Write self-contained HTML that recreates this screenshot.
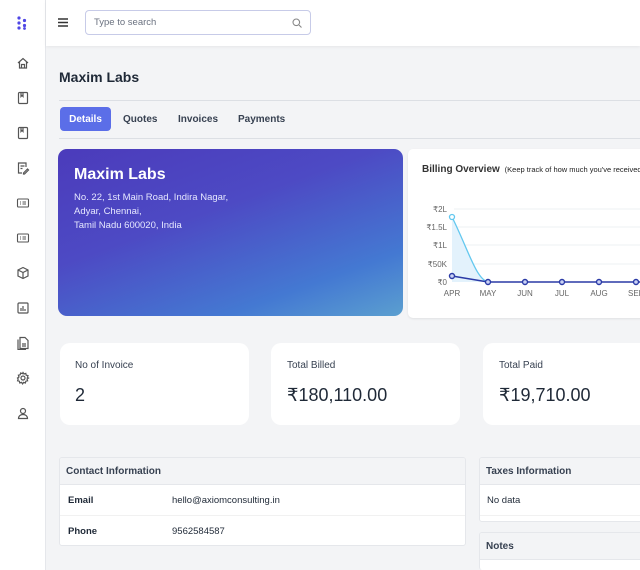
<!DOCTYPE html>
<html style="width:640px;height:570px;overflow:hidden"><head><meta charset="utf-8"><style>
*{box-sizing:border-box;margin:0;padding:0}
body{width:640px;height:570px;overflow:hidden;background:#f3f4f6;font-family:"Liberation Sans",sans-serif;color:#1f2937;position:relative}
.a{position:absolute}
.side{left:0;top:0;width:46px;height:570px;background:#fff;border-right:1px solid #e5e7eb}
.top{left:46px;top:0;width:594px;height:46px;background:#fff;box-shadow:0 1px 3px rgba(0,0,0,.06)}
.ic{position:absolute;left:16px;width:14px;height:14px}
.card{background:#fff;border-radius:10px}
.tab{top:107px;height:24px;font-size:10px;font-weight:bold;line-height:25px;color:#374151}
.lbl{font-size:10px;color:#374151}
.val{font-size:18px;color:#1f2937}
.box{background:#fff;border:1px solid #e5e7eb;border-radius:3px;overflow:hidden}
.hd{background:#f3f4f6;height:27px;line-height:27px;padding-left:6px;font-size:10px;font-weight:bold;color:#374151;border-bottom:1px solid #e5e7eb}
.row{height:31px;line-height:31px;font-size:9.5px;border-bottom:1px solid #f1f1f1;position:relative}
</style></head><body>
<div class="a side">
<svg class="a" style="left:17px;top:16px" width="10" height="14"><g fill="#4f46e5"><circle cx="2" cy="2" r="1.6"/><circle cx="2" cy="7" r="1.6"/><circle cx="2" cy="12" r="1.6"/><circle cx="7.5" cy="4.5" r="1.6"/><circle cx="7.5" cy="9.5" r="1.6"/><circle cx="7.5" cy="12.5" r="1.4"/></g></svg>
<svg class="ic" style="top:56px" viewBox="0 0 14 14" fill="none" stroke="#555" stroke-width="1.2"><path d="M2 7L7 2.5 12 7M3.5 6v6h7V6M5.5 12V8.5h3V12"/></svg>
<svg class="ic" style="top:91px" viewBox="0 0 14 14" fill="none" stroke="#555" stroke-width="1.2"><rect x="2.5" y="1.5" width="9" height="11" rx="1"/><path d="M5 1.5v4l1-1 1 1v-4"/></svg>
<svg class="ic" style="top:126px" viewBox="0 0 14 14" fill="none" stroke="#555" stroke-width="1.2"><rect x="2.5" y="1.5" width="9" height="11" rx="1"/><path d="M5 1.5v4l1-1 1 1v-4"/></svg>
<svg class="ic" style="top:161px" viewBox="0 0 14 14" fill="none" stroke="#555" stroke-width="1.2"><path d="M10 6V2H2.5v10H6M4.5 5h4M4.5 7.5h2M7.5 12l4-4 1 1-4 4h-1z"/></svg>
<svg class="ic" style="top:196px" viewBox="0 0 14 14" fill="none" stroke="#555" stroke-width="1.1"><rect x="1.5" y="3" width="11" height="8" rx="1"/><path d="M4 6h1M6.5 6h3.5M4 8h1M6.5 8h3.5"/></svg>
<svg class="ic" style="top:231px" viewBox="0 0 14 14" fill="none" stroke="#555" stroke-width="1.1"><rect x="1.5" y="3" width="11" height="8" rx="1"/><path d="M4 6h1M6.5 6h3.5M4 8h1M6.5 8h3.5"/></svg>
<svg class="ic" style="top:266px" viewBox="0 0 14 14" fill="none" stroke="#555" stroke-width="1.2"><path d="M7 1.5l5 2.5v6L7 12.5 2 10V4zM2 4l5 2.5L12 4M7 6.5v6"/></svg>
<svg class="ic" style="top:301px" viewBox="0 0 14 14" fill="none" stroke="#555" stroke-width="1.2"><rect x="2" y="2" width="10" height="10" rx="1"/><path d="M5 10V7M7 10V5M9 10V8"/></svg>
<svg class="ic" style="top:336px" viewBox="0 0 14 14" fill="none" stroke="#555" stroke-width="1.2"><path d="M4 1.5h5l3 3v8H4zM2 3.5v10h8M6 8h4M6 10h4"/></svg>
<svg class="ic" style="top:371px" viewBox="0 0 14 14" fill="none" stroke="#555" stroke-width="1.2"><circle cx="7" cy="7" r="2"/><path d="M7 1.5l1 1.5 1.8-.6.4 1.8 1.8.4-.6 1.8L12.5 7l-1.5 1 .6 1.8-1.8.4-.4 1.8-1.8-.6-1 1.5-1-1.5-1.8.6-.4-1.8-1.8-.4.6-1.8L1.5 7 3 6l-.6-1.8 1.8-.4.4-1.8 1.8.6z"/></svg>
<svg class="ic" style="top:406px" viewBox="0 0 14 14" fill="none" stroke="#555" stroke-width="1.2"><circle cx="7" cy="5" r="2.5"/><path d="M2.5 12.5c0-2.5 2-4 4.5-4s4.5 1.5 4.5 4z"/></svg>
</div>
<div class="a top">
<svg class="a" style="left:12px;top:18px" width="10" height="9"><path d="M0 1h10M0 4.5h10M0 8h10" stroke="#333" stroke-width="1.4"/></svg>
<div class="a" style="left:39px;top:10px;width:226px;height:25px;border:1px solid #c7cbe8;border-radius:4px;font-size:9.5px;color:#6b7280;line-height:24px;padding-left:8px">Type to search
<svg class="a" style="right:8px;top:7px" width="10" height="10" fill="none" stroke="#888" stroke-width="1.1"><circle cx="4.3" cy="4.3" r="3.3"/><path d="M7 7l2.5 2.5"/></svg></div>
</div>
<div class="a" style="left:59px;top:69px;font-size:14px;font-weight:bold;color:#1f2937">Maxim Labs</div>
<div class="a" style="left:59px;top:100px;width:581px;border-top:1px solid #dcdfe4"></div>
<div class="a tab" style="left:60px;width:51px;background:#5b6ee8;color:#fff;border-radius:4px;text-align:center">Details</div>
<div class="a tab" style="left:123px">Quotes</div>
<div class="a tab" style="left:178px">Invoices</div>
<div class="a tab" style="left:238px">Payments</div>
<div class="a" style="left:59px;top:138px;width:581px;border-top:1px solid #dcdfe4"></div>
<div class="a" style="left:58px;top:149px;width:345px;height:167px;border-radius:9px;background:linear-gradient(160deg,#4b3bbb 0%,#4d4ac4 40%,#4479d2 78%,#5b9fd0 100%);color:#fff">
<div class="a" style="left:16px;top:17px;font-size:16px;font-weight:bold">Maxim Labs</div>
<div class="a" style="left:16px;top:42px;font-size:9.5px;line-height:14px;color:#e6e8ff">No. 22, 1st Main Road, Indira Nagar,<br>Adyar, Chennai,<br>Tamil Nadu 600020, India</div>
</div>
<div class="a" style="left:408px;top:149px;width:240px;height:169px;background:#fff;border-radius:5px;box-shadow:0 1px 2px rgba(0,0,0,.08)">
<div class="a" style="left:14px;top:15px;font-size:10px;font-weight:bold;color:#333;white-space:nowrap">Billing Overview <span style="font-size:7.5px;font-weight:normal;color:#222">&nbsp;(Keep track of how much you've received)</span></div>
<svg class="a" style="left:0;top:0" width="240" height="169" font-family="Liberation Sans" font-size="8" fill="#666">
<g stroke="#eef0f3"><path d="M46 60H240M46 78H240M46 96H240M46 115H240"/></g>
<text x="39" y="63" text-anchor="end">₹2L</text><text x="39" y="81" text-anchor="end">₹1.5L</text><text x="39" y="99" text-anchor="end">₹1L</text><text x="39" y="118" text-anchor="end">₹50K</text><text x="39" y="136" text-anchor="end">₹0</text>
<path d="M44 68C60 100 68 130 80 133L44 133Z" fill="#e3f2fc"/>
<path d="M44 68C60 100 68 130 80 133" stroke="#63c8ef" stroke-width="1.3" fill="none"/>
<path d="M44 127L80 133H240" stroke="#2a3aa6" stroke-width="1.6" fill="none"/>
<circle cx="44" cy="68" r="2.5" fill="#fff" stroke="#63c8ef" stroke-width="1.3"/>
<g fill="#cbd3f5" stroke="#2a3aa6" stroke-width="1.4"><circle cx="44" cy="127" r="2.5"/><circle cx="80" cy="133" r="2.5"/><circle cx="117" cy="133" r="2.5"/><circle cx="154" cy="133" r="2.5"/><circle cx="191" cy="133" r="2.5"/><circle cx="228" cy="133" r="2.5"/></g>
<g text-anchor="middle"><text x="44" y="147">APR</text><text x="80" y="147">MAY</text><text x="117" y="147">JUN</text><text x="154" y="147">JUL</text><text x="191" y="147">AUG</text><text x="228" y="147">SEP</text></g>
</svg>
</div>
<div class="a card" style="left:60px;top:343px;width:189px;height:82px"><div class="a lbl" style="left:15px;top:17px">No of Invoice</div><div class="a val" style="left:15px;top:42px">2</div></div>
<div class="a card" style="left:271px;top:343px;width:189px;height:82px"><div class="a lbl" style="left:16px;top:17px">Total Billed</div><div class="a val" style="left:16px;top:42px">₹180,110.00</div></div>
<div class="a card" style="left:483px;top:343px;width:189px;height:82px"><div class="a lbl" style="left:16px;top:17px">Total Paid</div><div class="a val" style="left:16px;top:42px">₹19,710.00</div></div>
<div class="a box" style="left:59px;top:457px;width:407px;height:89px"><div class="hd">Contact Information</div>
<div class="row"><b class="a" style="left:8px;font-size:9.5px">Email</b><span class="a" style="left:112px">hello@axiomconsulting.in</span></div>
<div class="row" style="border:0"><b class="a" style="left:8px;font-size:9.5px">Phone</b><span class="a" style="left:112px">9562584587</span></div></div>
<div class="a box" style="left:479px;top:457px;width:170px;height:65px"><div class="hd">Taxes Information</div><div class="row" style="padding-left:7px">No data</div></div>
<div class="a box" style="left:479px;top:532px;width:170px;height:38px;border-bottom:0"><div class="hd">Notes</div></div>
</body></html>
